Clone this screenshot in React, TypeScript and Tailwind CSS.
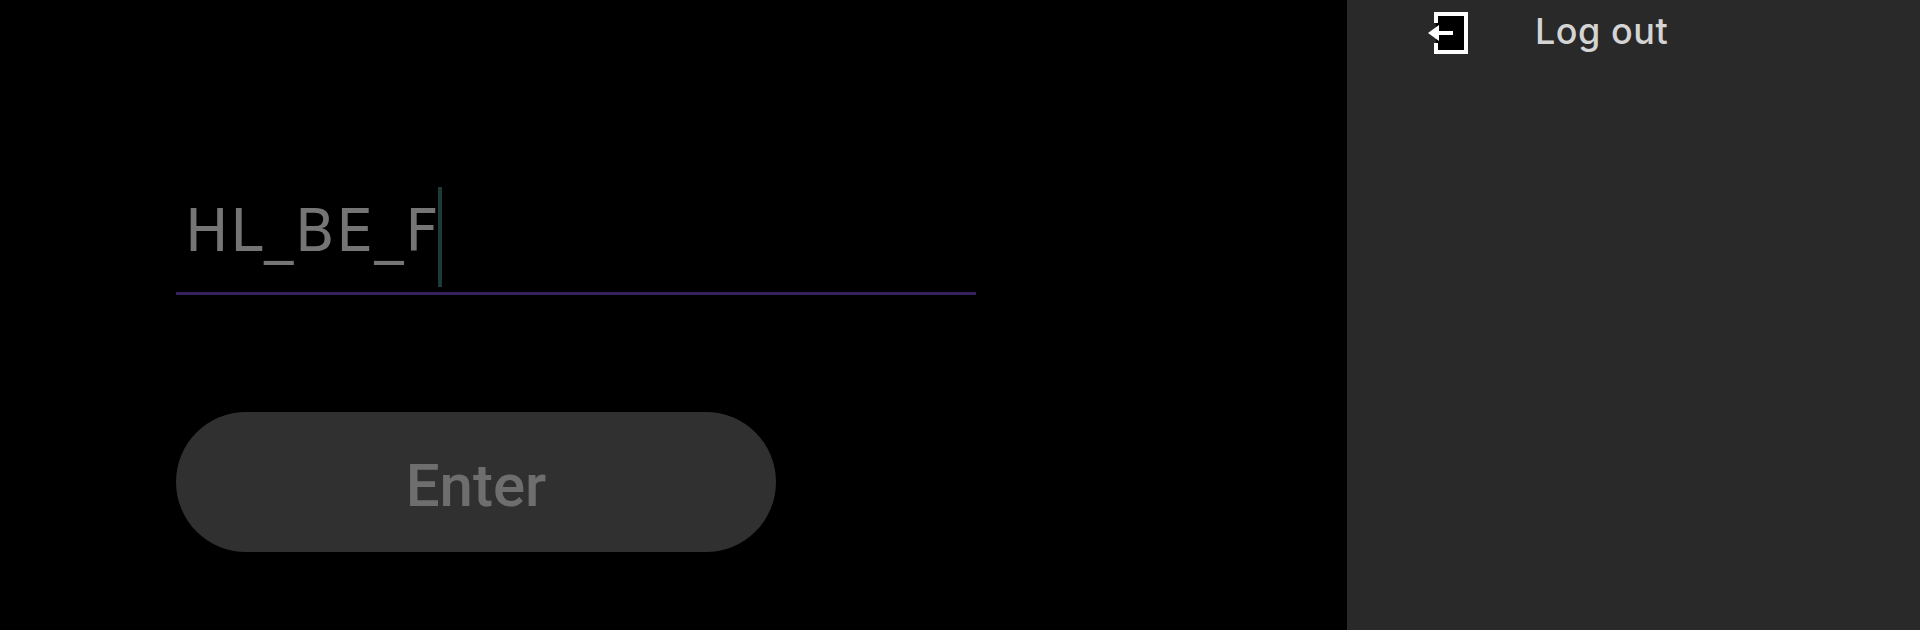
import { useState } from "react";

function LogoutIcon() {
  return (
    <svg width="40" height="42" viewBox="0 0 40 42" className="mt-[3px] shrink-0">
      <rect x="8" y="2" width="30" height="38" fill="#000" />
      <path d="M8 11V2h30v38H8v-9" fill="none" stroke="#fff" strokeWidth="4" />
      <path d="M0 21 L11 13v6h14v4H11v6Z" fill="#fff" />
    </svg>
  );
}

function App() {
  const [code] = useState("HL_BE_F");

  return (
    <div className="flex h-[630px] w-[1920px] overflow-hidden bg-black">
      <main className="flex-1 pl-[176px] pt-[187px]">
        <div className="flex h-[108px] w-[800px] items-start border-b-[3px] border-[#35215c] pl-[9px]">
          <span className="-mt-[6px] font-['DejaVu_Sans',sans-serif] text-[58px] leading-[100px] tracking-[1.65px] text-[#757575]">
            {code}
          </span>
          <span className="-ml-[2px] h-[100px] w-[4px] bg-[#1c3b36]" />
        </div>
        <button className="mt-[117px] flex h-[140px] w-[600px] items-center justify-center rounded-[70px] bg-[#303030] pt-[7px] font-['Roboto',sans-serif] text-[60px] font-medium text-[#6e6e6e]">
          Enter
        </button>
      </main>
      <aside className="w-[573px] bg-[#292929]">
        <div className="flex items-center pl-[81px] pt-[9px]">
          <LogoutIcon />
          <span className="-mt-[2px] ml-[67px] font-['Inter',sans-serif] text-[36px] leading-[40px] font-medium tracking-[0.5px] text-[#d4d4d4]">
            Log out
          </span>
        </div>
      </aside>
    </div>
  );
}

export default App;
